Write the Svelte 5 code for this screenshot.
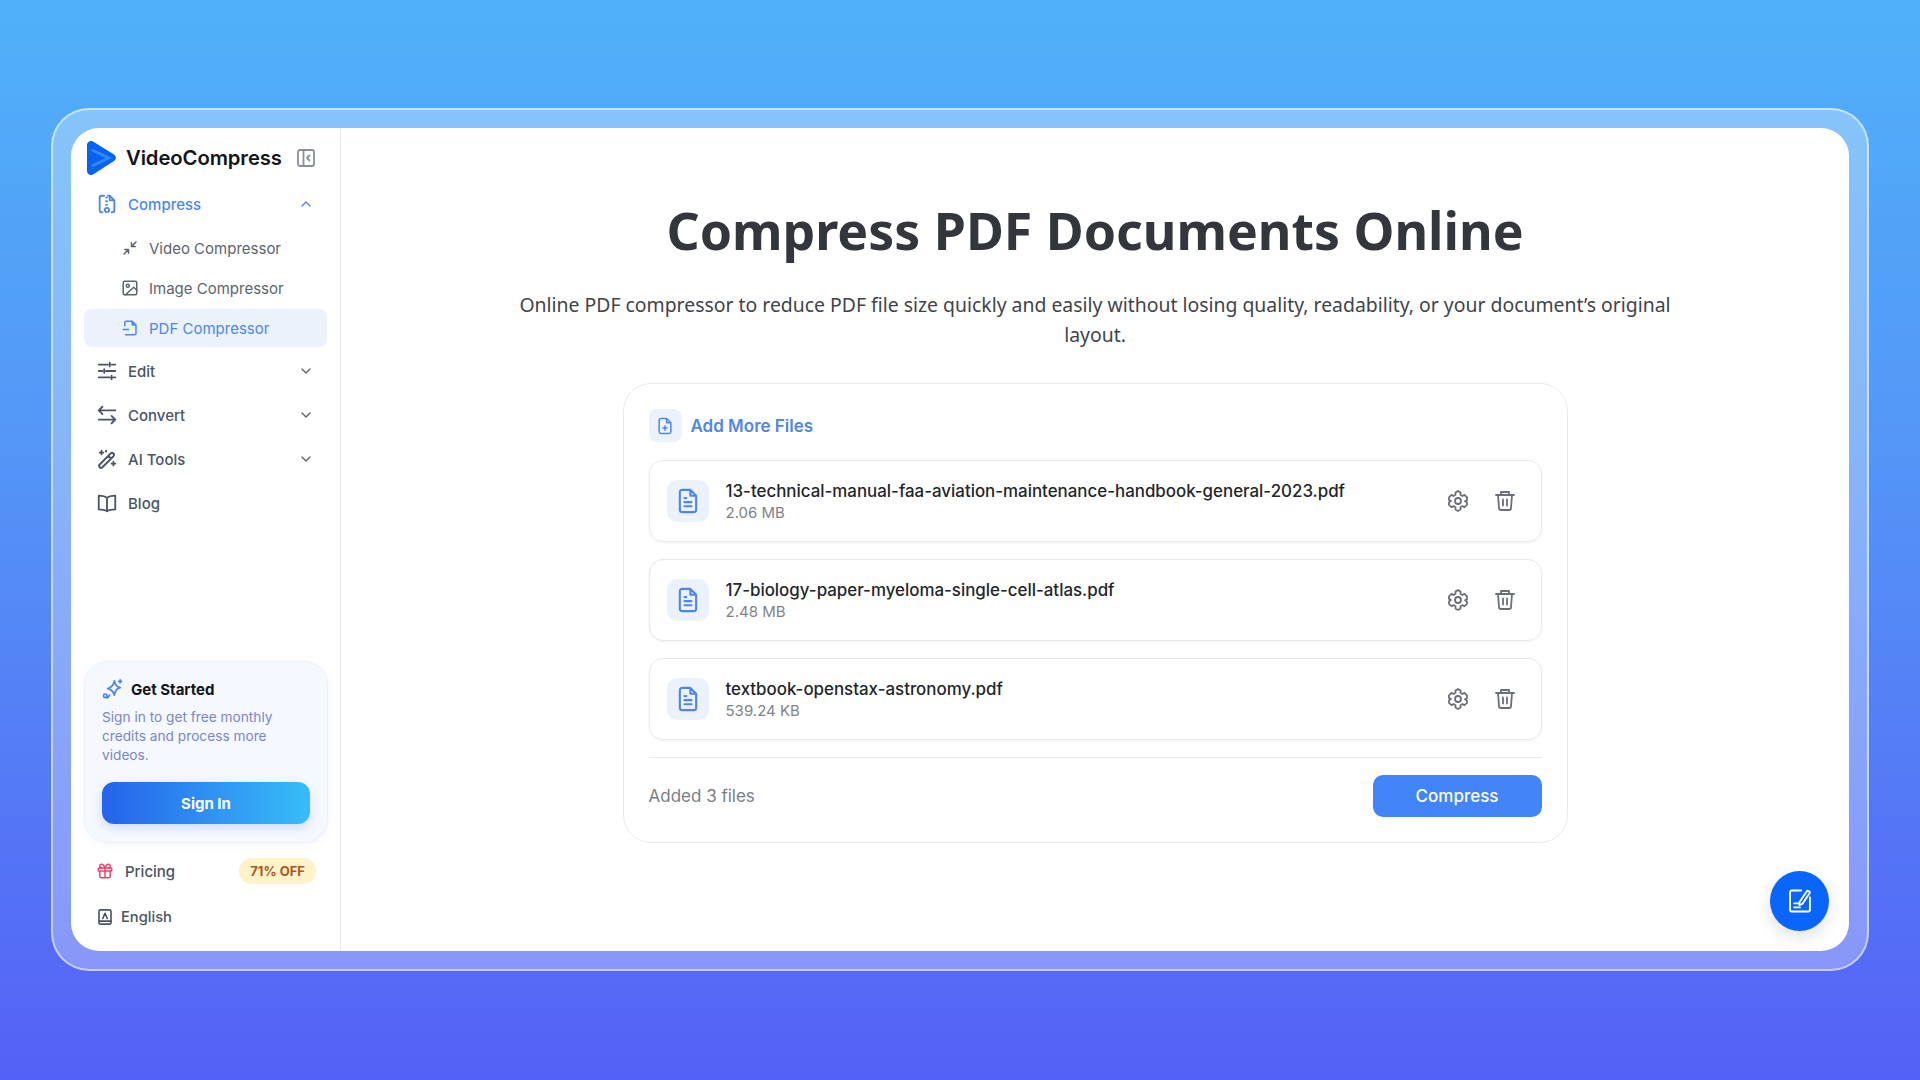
<script>
  const groups = [
    { label: "Edit", icon: "edit" },
    { label: "Convert", icon: "convert" },
    { label: "AI Tools", icon: "wand" }
  ];
  const files = [
    { name: "13-technical-manual-faa-aviation-maintenance-handbook-general-2023.pdf", size: "2.06 MB" },
    { name: "17-biology-paper-myeloma-single-cell-atlas.pdf", size: "2.48 MB" },
    { name: "textbook-openstax-astronomy.pdf", size: "539.24 KB" }
  ];
</script>

{#snippet chevron(up)}
  <svg class="chevron" viewBox="0 0 24 24" width="16" height="16" fill="none" stroke="currentColor" stroke-width="2" stroke-linecap="round" stroke-linejoin="round">
    <path d={up ? "M6 15l6-6 6 6" : "M6 9l6 6 6-6"} />
  </svg>
{/snippet}

{#snippet navicon(name)}
  <svg viewBox="0 0 24 24" width="22" height="22" fill="none" stroke="currentColor" stroke-width="2" stroke-linecap="round" stroke-linejoin="round">
    {#if name === "edit"}
      <path d="M3 5h10M17 5h4M15 3v4M3 12h4M11 12h10M9 10v4M3 19h12M19 19h2M17 17v4" />
    {:else if name === "convert"}
      <path d="M7 3L3 7l4 4M3 7h18M17 13l4 4-4 4M21 17H3" />
    {:else if name === "wand"}
      <path d="M4 18L16 6a2.1 2.1 0 0 1 3 3L7 21a2.1 2.1 0 0 1-3-3zM13.5 8.500l3 3M6 3v4M4 5h4M19 15v4M17 17h4M11 3v1" />
    {:else}
      <path d="M12 6.500C10 4.500 7 4 3 4v15c4 0 7 .5 9 2 2-1.500 5-2 9-2V4c-4 0-7 .5-9 2.500zM12 6.500V21" />
    {/if}
  </svg>
{/snippet}

<div class="page">
  <div class="frame">
    <div class="card">
      <aside class="sidebar">
        <div class="brand">
          <svg viewBox="0 0 32 36" width="32" height="36">
            <path d="M2 5c0-3 3-5 6-3.500l21 13c2.500 1.500 2.500 5 0 6.500L8 34.500c-3 1.500-6-.5-6-3.500z" fill="#0a63f0" />
            <path d="M7 10l17 8-17 8" fill="none" stroke="#2f8cff" stroke-width="2.500" />
          </svg>
          <span class="brand-name">VideoCompress</span>
          <svg class="collapse" viewBox="0 0 18 18" width="18" height="18" fill="none" stroke="#8b8f96" stroke-width="1.800" stroke-linejoin="round" stroke-linecap="round">
            <rect x="1" y="1" width="16" height="16" rx="2" />
            <path d="M6.500 1v16M12.500 6.500L10 9l2.500 2.500" />
          </svg>
        </div>

        <nav class="nav">
          <div class="nav-row active">
            <span class="nav-icon">
              <svg viewBox="0 0 24 24" width="22" height="22" fill="none" stroke="currentColor" stroke-width="2" stroke-linecap="round" stroke-linejoin="round">
                <path d="M9 3H6a2 2 0 0 0-2 2v14a2 2 0 0 0 2 2h1M17 21h1a2 2 0 0 0 2-2V8l-5-5h-2M15 3v5h5M11 5h1M11 9h1M11 13h1" />
                <circle cx="12" cy="18.500" r="2.300" />
              </svg>
            </span>
            <span class="nav-label">Compress</span>
            {@render chevron(true)}
          </div>

          <div class="sub-row first">
            <svg viewBox="0 0 24 24" width="18" height="18" fill="none" stroke="currentColor" stroke-width="2" stroke-linecap="round" stroke-linejoin="round">
              <path d="M20 4l-6 6M14 5v5h5M4 20l6-6M5 14h5v5" />
            </svg>
            <span>Video Compressor</span>
          </div>
          <div class="sub-row">
            <svg viewBox="0 0 24 24" width="18" height="18" fill="none" stroke="currentColor" stroke-width="2" stroke-linecap="round" stroke-linejoin="round">
              <rect x="3" y="3" width="18" height="18" rx="2" />
              <circle cx="9" cy="9" r="2" />
              <path d="M21 15l-4-4L6 21" />
            </svg>
            <span>Image Compressor</span>
          </div>
          <div class="sub-row selected">
            <svg viewBox="0 0 24 24" width="18" height="18" fill="none" stroke="currentColor" stroke-width="2" stroke-linecap="round" stroke-linejoin="round">
              <path d="M5 9V5a2 2 0 0 1 2-2h8l5 5v11a2 2 0 0 1-2 2H6M15 3v5h5M3 14h7" />
            </svg>
            <span>PDF Compressor</span>
          </div>

          {#each groups as group}
            <div class="nav-row">
              <span class="nav-icon">{@render navicon(group.icon)}</span>
              <span class="nav-label">{group.label}</span>
              {@render chevron(false)}
            </div>
          {/each}

          <div class="nav-row">
            <span class="nav-icon">{@render navicon("blog")}</span>
            <span class="nav-label">Blog</span>
          </div>
        </nav>

        <div class="promo">
          <div class="promo-head">
            <svg viewBox="0 0 24 24" width="23" height="23" fill="none" stroke="#4c86ec" stroke-width="1.800" stroke-linecap="round" stroke-linejoin="round">
              <path d="M14 3c.5 4 2 6 6 7-4 1-5.500 3-6 8-1-4-3-6-7-7 4-1 6-3 7-8zM20 2v3M18.500 3.500h3M6.500 21l2.500-3" />
              <circle cx="4.500" cy="18.500" r="1.800" />
            </svg>
            <span>Get Started</span>
          </div>
          <p>Sign in to get free monthly credits and process more videos.</p>
          <div class="signin">Sign In</div>
        </div>

        <div class="pricing">
          <svg viewBox="0 0 24 24" width="18" height="18" fill="none" stroke="#e8476a" stroke-width="2" stroke-linecap="round" stroke-linejoin="round">
            <rect x="3" y="8" width="18" height="4" rx="1" />
            <path d="M12 8v13M19 12v7a2 2 0 0 1-2 2H7a2 2 0 0 1-2-2v-7M7.500 8a2.500 2.500 0 0 1 0-5C10 3 12 8 12 8s2-5 4.500-5a2.500 2.500 0 0 1 0 5" />
          </svg>
          <span class="pricing-label">Pricing</span>
          <span class="off">71% OFF</span>
        </div>

        <div class="lang">
          <svg viewBox="0 0 24 24" width="18" height="18" fill="none" stroke="#4b5563" stroke-width="2.200" stroke-linecap="round" stroke-linejoin="round">
            <rect x="4" y="2.500" width="16" height="19" rx="2" />
            <path d="M9 14l3-7 3 7M4 17.500h16" />
          </svg>
          <span>English</span>
        </div>
      </aside>

      <main class="main">
        <h1>Compress PDF Documents Online</h1>
        <p class="lead">Online PDF compressor to reduce PDF file size quickly and easily without losing quality, readability, or your document’s original layout.</p>

        <section class="panel">
          <div class="add">
            <span class="add-icon">
              <svg viewBox="0 0 24 24" width="20" height="20" fill="none" stroke="#4f86ea" stroke-width="1.800" stroke-linecap="round" stroke-linejoin="round">
                <path d="M14 3H7a2 2 0 0 0-2 2v14a2 2 0 0 0 2 2h10a2 2 0 0 0 2-2V8zM14 3v5h5M12 12v5M9.500 14.500h5" />
              </svg>
            </span>
            <span>Add More Files</span>
          </div>

          {#each files as file}
            <div class="file">
              <span class="file-icon">
                <svg viewBox="0 0 24 24" width="28" height="28" fill="none" stroke="#4f86ea" stroke-width="1.800" stroke-linecap="round" stroke-linejoin="round">
                  <path d="M14 2.500H7a2 2 0 0 0-2 2v15a2 2 0 0 0 2 2h10a2 2 0 0 0 2-2V7.500zM14 2.500v5h5M9 9.500h1.500M9 13h6M9 16.500h6" />
                </svg>
              </span>
              <div class="file-text">
                <div class="file-name">{file.name}</div>
                <div class="file-size">{file.size}</div>
              </div>
              <svg class="action" viewBox="0 0 24 24" width="24" height="24" fill="none" stroke="#6b6f76" stroke-width="1.800" stroke-linecap="round" stroke-linejoin="round">
                <path d="M9.500 3.500L12 2l2.500 1.500v2.300l2 1.200 2-1.100L21 8.300v2.800l-2 1.100v0l2 1.200v2.500l-2.500 2.300-2-1.100-2 1.100v2.300L12 22l-2.500-1.500v-2.300l-2-1.100-2 1.100L3 15.900v-2.700l2-1.200-2-1.100V8.300l2.500-2.400 2 1.100 2-1.200z" />
                <circle cx="12" cy="12" r="3" />
              </svg>
              <svg class="action" viewBox="0 0 24 24" width="24" height="24" fill="none" stroke="#6b6f76" stroke-width="1.800" stroke-linecap="round" stroke-linejoin="round">
                <path d="M3 6h18M8 6V3h8v3M5 6l1 13a2 2 0 0 0 2 2h8a2 2 0 0 0 2-2l1-13M10 10.500v6M14 10.500v6" />
              </svg>
            </div>
          {/each}

          <div class="panel-foot">
            <span class="count">Added 3 files</span>
            <div class="compress">Compress</div>
          </div>
        </section>

        <div class="fab">
          <svg viewBox="0 0 24 24" width="28" height="28" fill="none" stroke="#fff" stroke-width="1.600" stroke-linecap="round" stroke-linejoin="round">
            <path d="M13 3H5a1.500 1.500 0 0 0-1.500 1.500v15A1.500 1.500 0 0 0 5 21h14a1.500 1.500 0 0 0 1.500-1.500V9M7 14h4M7 17.500h5M11.500 13L18 3.500c.6-.8 3 .7 2.500 1.500L14 14.500l-2.500 1z" />
          </svg>
        </div>
      </main>
    </div>
  </div>
</div>

<style>
  :global(body) {
    margin: 0;
    font-family: Inter, "Liberation Sans", sans-serif;
  }

  .page {
    width: 1920px;
    height: 1080px;
    box-sizing: border-box;
    padding: 108px 51px;
    background: linear-gradient(180deg, #50b1f9 0%, #5497f7 40%, #5561f6 100%);
  }

  .frame {
    height: 863px;
    box-sizing: border-box;
    padding: 18px;
    border: 2px solid rgba(255, 255, 255, 0.55);
    border-radius: 38px;
    background: rgba(255, 255, 255, 0.3);
  }

  .card {
    display: flex;
    height: 823px;
    border-radius: 28px;
    background: #fff;
    overflow: hidden;
  }

  .sidebar {
    display: flex;
    flex-direction: column;
    flex: none;
    width: 270px;
    box-sizing: border-box;
    padding: 0 13px 11px 13px;
    border-right: 1px solid #e8eaee;
  }

  .brand {
    display: flex;
    align-items: center;
    height: 49px;
    padding-top: 5px;
    margin-left: 1px;
  }

  .brand-name {
    margin-left: 9px;
    font-size: 20.300px;
    font-weight: 600;
    color: #14161a;
    letter-spacing: -0.1px;
  }

  .collapse {
    margin-left: 15px;
  }

  .nav {
    display: flex;
    flex-direction: column;
    flex: 1;
  }

  .nav-row {
    display: flex;
    align-items: center;
    height: 44px;
    padding: 0 13px 0 12px;
    font-size: 15px;
    font-weight: 500;
    color: #4b5563;
  }

  .nav-row.active {
    color: #4f86ea;
  }

  .nav-icon {
    display: flex;
    margin-right: 10px;
  }

  .nav-label {
    flex: 1;
  }

  .chevron {
    color: #5b6470;
  }

  .nav-row.active .chevron {
    color: #4f86ea;
  }

  .sub-row {
    display: flex;
    align-items: center;
    gap: 10px;
    height: 38px;
    margin-top: 2px;
    padding-left: 37px;
    border-radius: 8px;
    font-size: 15px;
    font-weight: 400;
    color: #5b6470;
  }

  .sub-row.first {
    margin-top: 3px;
  }

  .sub-row.selected {
    margin-bottom: 2px;
    background: #ebf2fc;
    color: #4f86ea;
  }

  .promo {
    box-sizing: border-box;
    height: 182px;
    margin-right: -1px;
    padding: 16px 17px;
    border: 1px solid #eef1f8;
    border-radius: 24px;
    background: #f5f8fe;
    box-shadow: 0 2px 8px rgba(120, 140, 220, 0.08);
  }

  .promo-head {
    display: flex;
    align-items: center;
    gap: 7px;
    margin-left: -1px;
    font-size: 15px;
    font-weight: 700;
    color: #14161a;
  }

  .promo p {
    margin: 7px 0 0;
    font-size: 13.700px;
    line-height: 19px;
    color: #7a87c4;
  }

  .signin {
    display: flex;
    align-items: center;
    justify-content: center;
    height: 42px;
    margin-top: 17px;
    border-radius: 12px;
    background: linear-gradient(90deg, #2563eb, #38bdf8);
    box-shadow: 0 4px 10px rgba(90, 130, 240, 0.25);
    font-size: 15px;
    font-weight: 700;
    color: #fff;
  }

  .pricing {
    display: flex;
    align-items: center;
    height: 46px;
    margin-top: 5px;
    padding: 0 11px 0 12px;
    font-size: 15px;
    font-weight: 500;
    color: #4b5563;
  }

  .pricing-label {
    flex: 1;
    margin-left: 11px;
  }

  .off {
    padding: 5px 11px;
    border-radius: 13px;
    background: #fdf2c8;
    font-size: 13px;
    font-weight: 700;
    color: #a85a1c;
  }

  .lang {
    display: flex;
    align-items: center;
    gap: 7px;
    height: 46px;
    padding-left: 12px;
    font-size: 14.700px;
    font-weight: 500;
    color: #4b5563;
  }

  .main {
    position: relative;
    flex: 1;
    display: flex;
    flex-direction: column;
    align-items: center;
    padding-top: 70px;
  }

  h1 {
    margin: 0;
    font-family: "Noto Sans", "Open Sans", sans-serif;
    font-size: 51.800px;
    line-height: 64px;
    font-weight: 700;
    color: #33373d;
  }

  .lead {
    width: 1180px;
    margin: 28px 0 0;
    font-family: "Noto Sans", "Open Sans", sans-serif;
    font-size: 19.400px;
    line-height: 30px;
    text-align: center;
    color: #3f444b;
  }

  .panel {
    box-sizing: border-box;
    width: 945px;
    margin-top: 33px;
    padding: 25px 25px 25px;
    border: 1px solid #e8eaee;
    border-radius: 28px;
  }

  .add {
    display: flex;
    align-items: center;
    gap: 9px;
    font-size: 17px;
    font-weight: 600;
    color: #4f86ea;
  }

  .add-icon {
    display: flex;
    align-items: center;
    justify-content: center;
    width: 33px;
    height: 33px;
    border-radius: 8px;
    background: #ebf2fc;
  }

  .file {
    display: flex;
    align-items: center;
    height: 82px;
    box-sizing: border-box;
    margin-top: 17px;
    padding: 0 24px 0 17px;
    border: 1px solid #e8eaee;
    border-radius: 14px;
    box-shadow: 0 1px 3px rgba(0, 0, 0, 0.05);
  }

  .add + .file {
    margin-top: 18px;
  }

  .file-icon {
    display: flex;
    align-items: center;
    justify-content: center;
    width: 42px;
    height: 42px;
    border-radius: 10px;
    background: #ebf2fc;
  }

  .file-text {
    flex: 1;
    margin-left: 17px;
  }

  .file-name {
    font-size: 16.900px;
    line-height: 24px;
    font-weight: 450;
    color: #23262b;
  }

  .file-size {
    font-size: 15px;
    line-height: 20px;
    color: #7f8389;
  }

  .action + .action {
    margin-left: 23px;
  }

  .panel-foot {
    display: flex;
    align-items: center;
    justify-content: space-between;
    margin-top: 17px;
    padding-top: 17px;
    border-top: 1px solid #e8eaee;
  }

  .count {
    font-size: 17px;
    color: #7a7e85;
  }

  .compress {
    display: flex;
    align-items: center;
    justify-content: center;
    width: 169px;
    height: 42px;
    border-radius: 10px;
    background: #4285f8;
    font-size: 17px;
    font-weight: 500;
    color: #fff;
  }

  .fab {
    position: absolute;
    right: 20px;
    bottom: 20px;
    display: flex;
    align-items: center;
    justify-content: center;
    width: 59px;
    height: 60px;
    border-radius: 50%;
    background: #0a66fb;
    box-shadow: 0 6px 16px rgba(0, 0, 0, 0.12);
  }
</style>
